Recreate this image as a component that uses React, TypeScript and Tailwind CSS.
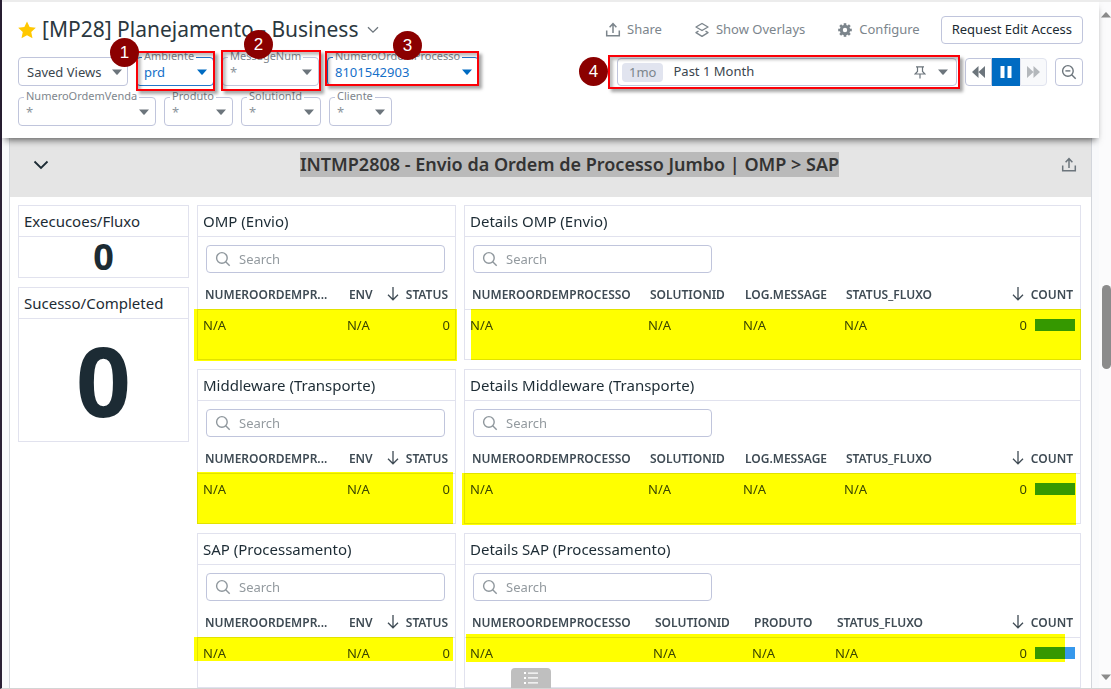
import React, { useId } from "react";

function Caret({ className = "" }: { className?: string }) {
  return (
    <svg viewBox="0 0 10 6" className={"pointer-events-none h-[6px] w-[10px] " + className} aria-hidden="true">
      <path d="M0 0.5h10L5.6 5.4a.8.8 0 0 1-1.2 0z" fill="currentColor" />
    </svg>
  );
}

function ExportIcon() {
  return (
    <svg viewBox="0 0 16 16" className="size-4" fill="none" stroke="currentColor" strokeWidth="1.5" aria-hidden="true">
      <path d="M1.7 8.5v5.3h12.6V8.5" />
      <path d="M8 11V2M4.6 5.2 8 1.7l3.4 3.5" />
    </svg>
  );
}

function LayersIcon() {
  return (
    <svg viewBox="0 0 16 16" className="size-4" fill="none" stroke="currentColor" strokeWidth="1.4" strokeLinejoin="round" aria-hidden="true">
      <path d="M8 1.5 14 5 8 8.500 2 5z" />
      <path d="M4.500 9 2 10.600l6 3.700 6-3.700L11.500 9" />
    </svg>
  );
}

const gearTeeth = [0, 45, 90, 135, 180, 225, 270, 315];

function GearIcon() {
  return (
    <svg viewBox="0 0 16 16" className="size-4" fill="none" stroke="currentColor" aria-hidden="true">
      <circle cx="8" cy="8" r="3.700" strokeWidth="3" />
      {gearTeeth.map((angle) => (
        <path key={angle} d="M8 3.500V1.200" strokeWidth="2.600" transform={`rotate(${angle} 8 8)`} />
      ))}
    </svg>
  );
}

function SearchIcon({ minus = false }: { minus?: boolean }) {
  return (
    <svg viewBox="0 0 16 16" className="size-4" fill="none" stroke="currentColor" strokeWidth="1.4" aria-hidden="true">
      <circle cx="6.900" cy="6.900" r="5.300" />
      <path d="m10.700 10.700 4 4" />
      {minus && <path d="M4.400 6.900h5" />}
    </svg>
  );
}

function Callout({ n, className }: { n: number; className: string }) {
  return (
    <span
      className={
        "absolute z-20 flex size-[29px] items-center justify-center rounded-full bg-[#8b0000] font-['Liberation_Sans',sans-serif] text-[17px] leading-none text-white " +
        className
      }
    >
      {n}
    </span>
  );
}

function Frame({ className }: { className: string }) {
  return (
    <span
      className={
        "pointer-events-none absolute z-10 border-2 border-[#fb0007] shadow-[3px_3px_3px_rgba(0,0,0,0.35),inset_3px_3px_3px_rgba(0,0,0,0.25)] " +
        className
      }
    />
  );
}

type FilterProps = {
  label: string;
  value: string;
  width: string;
  active?: boolean;
  children?: React.ReactNode;
};

function Filter({ label, value, width, active = false, children }: FilterProps) {
  const id = useId();
  return (
    <div className={"relative " + width}>
      <select
        id={id}
        defaultValue={value}
        className={
          "h-[29px] w-full appearance-none rounded border bg-white pl-[7px] pr-5 pt-[2px] text-[13px] outline-none " +
          (active ? "border-[#2377cb] text-[#1570c9]" : "border-[#c0c5dc] text-[#8b949b]")
        }
      >
        <option>{value}</option>
      </select>
      <label
        htmlFor={id}
        className="absolute -top-[9px] left-[6px] bg-white px-[2px] text-[11px] leading-4 text-[#7e868d]"
      >
        {label}
      </label>
      <Caret className={"absolute right-[7px] top-3 " + (active ? "text-[#006bc2]" : "text-[#6c757c]")} />
      {children}
    </div>
  );
}

function Search({ label }: { label: string }) {
  return (
    <label className="flex h-7 w-[239px] items-center gap-2 rounded border border-[#c0c5dc] bg-white px-2 text-[#8f979d]">
      <SearchIcon />
      <input
        type="text"
        aria-label={"Search " + label}
        placeholder="Search"
        className="min-w-0 flex-1 bg-transparent pt-[2px] text-[13px] outline-none placeholder:text-[#939a9f]"
      />
    </label>
  );
}

function SortArrow() {
  return (
    <svg viewBox="0 0 12 14" className="inline-block h-[14px] w-3 align-[-2px]" fill="none" stroke="currentColor" strokeWidth="1.3" aria-hidden="true">
      <path d="M6 0v12.500M1 7.800l5 5 5-5" />
    </svg>
  );
}

function StatCard({ title, children, className }: { title: string; children: React.ReactNode; className: string }) {
  return (
    <section className={"flex flex-col border border-[#e1e2ee] bg-white " + className}>
      <h3 className="h-[31px] border-b border-[#e1e2ee] px-[5px] text-[15px] leading-[31px] text-[#1c2b34]">{title}</h3>
      <div className="flex flex-1 items-center justify-center font-bold leading-none text-[#1c2b34]">{children}</div>
    </section>
  );
}

type Column = { name: string; width: string };

type TableCardProps = {
  title: string;
  columns: Column[];
  total: string;
  bar?: boolean;
  marker: string;
};

function TableCard({ title, columns, total, bar = false, marker }: TableCardProps) {
  return (
    <section className="relative isolate h-[155px] min-w-0 border border-[#e1e2ee] bg-white">
      <h3 className="h-[31px] border-b border-[#e1e2ee] px-[5px] text-[15px] leading-[31px] text-[#1c2b34]">{title}</h3>
      <div className="px-2 pt-2">
        <Search label={title} />
      </div>
      <table className="mt-2 w-full table-fixed border-collapse text-left text-[13px] text-[#3b464e]">
        <colgroup>
          {columns.map((c) => (
            <col key={c.name} className={c.width} />
          ))}
          <col />
        </colgroup>
        <thead>
          <tr className="h-7 border-b border-[#e1e2ee] text-[12px] text-[#3f4b54]">
            {columns.map((c) => (
              <th key={c.name} scope="col" className="whitespace-nowrap p-0 pl-[7px] font-semibold">
                {c.name}
              </th>
            ))}
            <th scope="col" className="whitespace-nowrap p-0 pr-[7px] text-right font-semibold">
              <SortArrow /> <span className="pl-1">{total}</span>
            </th>
          </tr>
        </thead>
        <tbody>
          <tr className="h-8">
            {columns.map((c) => (
              <td key={c.name} className="p-0 pl-[5px]">
                N/A
              </td>
            ))}
            <td className="p-0 pr-[5px]">
              <div className="flex items-center justify-end gap-2">
                0{bar && <span className="h-3 w-10 bg-[#3598ec]" />}
              </div>
            </td>
          </tr>
        </tbody>
      </table>
      <span className={"pointer-events-none absolute bg-[#ffff00] mix-blend-multiply " + marker} />
    </section>
  );
}

const summary: Column[] = [
  { name: "NUMEROORDEMPR...", width: "w-[56%]" },
  { name: "ENV", width: "w-[14%]" },
];
const details: Column[] = [
  { name: "NUMEROORDEMPROCESSO", width: "w-[178px]" },
  { name: "SOLUTIONID", width: "w-[95px]" },
  { name: "LOG.MESSAGE", width: "w-[101px]" },
  { name: "STATUS_FLUXO", width: "w-[110px]" },
];
const detailsSap: Column[] = [
  { name: "NUMEROORDEMPROCESSO", width: "w-[183px]" },
  { name: "SOLUTIONID", width: "w-[99px]" },
  { name: "PRODUTO", width: "w-[83px]" },
  { name: "STATUS_FLUXO", width: "w-[110px]" },
];

const toolLink = "flex items-center gap-[6px] text-[13px] text-[#7c858c]";

export default function App() {
  return (
    <div className="relative flex min-h-screen border-b border-l-2 border-b-[#d4d4d4] border-l-[#2a2035] bg-white font-['Noto_Sans',sans-serif]">
      <div className="flex min-w-0 flex-1 flex-col bg-[#f8f9fb]">
        <header className="relative z-10 flex h-[138px] flex-col border-t-2 border-[#ececec] bg-white pl-4 pr-4 shadow-[0_5px_7px_-3px_rgba(0,0,0,0.6)]">
          <div className="mt-[14px] flex h-7 items-center">
            <svg viewBox="0 0 20 20" className="size-[18px]" aria-hidden="true">
              <path d="m10 .5 2.900 6.300 6.900.8-5.100 4.700 1.400 6.800L10 15.700l-6.100 3.400 1.400-6.800L.2 7.600l6.900-.8z" fill="#ffc800" />
            </svg>
            <h1 className="ml-[6px] whitespace-nowrap text-[21px] text-[#2b3840]">[MP28] Planejamento - Business</h1>
            <button type="button" aria-label="Dashboard menu" className="ml-[9px] text-[#6c757c]">
              <svg viewBox="0 0 12 8" className="h-2 w-3" fill="none" stroke="currentColor" strokeWidth="1.300">
                <path d="m1 1.200 5 5 5-5" />
              </svg>
            </button>
            <div className="ml-auto flex items-center">
              <a href="#share" className={toolLink}>
                <ExportIcon /> Share
              </a>
              <a href="#overlays" className={toolLink + " ml-8"}>
                <LayersIcon /> Show Overlays
              </a>
              <a href="#configure" className={toolLink + " ml-8"}>
                <GearIcon /> Configure
              </a>
              <button type="button" className="ml-[21px] h-7 whitespace-nowrap rounded border border-[#c0c5dc] px-[10px] text-[13px] text-[#1c2b34]">
                Request Edit Access
              </button>
            </div>
          </div>
          <div className="mt-[13px] flex items-start">
            <div className="flex gap-2">
              <div className="relative w-[110px]">
                <select aria-label="Saved Views" className="h-[29px] w-full appearance-none rounded border border-[#c0c5dc] bg-white pl-2 pt-[2px] text-[13px] text-[#3b464e]">
                  <option>Saved Views</option>
                </select>
                <Caret className="absolute right-[6px] top-3 text-[#6c757c]" />
              </div>
              <Filter label="Ambiente" value="prd" width="w-[78px]" active>
                <Frame className="left-0 -top-[6px] h-[40px] w-[79px]" />
                <Callout n={1} className="-left-[26px] -top-[19px]" />
              </Filter>
              <Filter label="MessageNum" value="*" width="w-[97px]">
                <Frame className="-left-px -top-[7px] h-[41px] w-[100px]" />
                <Callout n={2} className="left-[22px] -top-[27px]" />
              </Filter>
              <Filter label="NumeroOrdemProcesso" value="8101542903" width="w-[152px]" active>
                <Frame className="-left-[2px] -top-[6px] h-[35px] w-[154px]" />
                <Callout n={3} className="left-[66px] -top-[26px]" />
              </Filter>
            </div>
            <div className="ml-auto flex items-center pt-px">
              <button type="button" className="relative flex h-7 w-[340px] items-center rounded border border-[#c0c5dc] pl-1 pr-2 text-[13px] text-[#3b464e]">
                <span className="rounded bg-[#e1e4ef] px-[7px] leading-[19px] text-[#7c858c]">1mo</span>
                <span className="ml-[10px]">Past 1 Month</span>
                <svg viewBox="0 0 12 13" className="ml-auto h-[13px] w-3 text-[#6c757c]" fill="none" stroke="currentColor" strokeWidth="1.200" aria-hidden="true">
                  <path d="M2 .8h8M3.500 1v4.500L1 8h10L8.500 5.500V1M6 8v4.600" />
                </svg>
                <Caret className="ml-[12px] text-[#6c757c]" />
                <Frame className="-left-[10px] -top-[4px] h-[34px] w-[352px]" />
                <Callout n={4} className="-left-[39px] -top-[2px]" />
              </button>
              <div className="ml-2 flex h-7 w-[82px]">
                <button type="button" aria-label="Back" className="flex flex-1 items-center justify-center rounded-l border border-[#c0c5dc] text-[#6c757c]">
                  <svg viewBox="0 0 13 12" className="h-3 w-[13px]" fill="currentColor">
                    <path d="M6.500 0v12L0 6zM13 0v12L6.500 6z" />
                  </svg>
                </button>
                <button type="button" aria-label="Pause" className="flex w-7 items-center justify-center bg-[#006bc2] text-white">
                  <svg viewBox="0 0 12 12" className="size-3" fill="currentColor">
                    <path d="M.5 0h4v12h-4zM7.500 0h4v12h-4z" />
                  </svg>
                </button>
                <button type="button" aria-label="Forward" disabled className="flex flex-1 items-center justify-center rounded-r border border-[#e1e4ef] bg-[#f8f9fb] text-[#b4b8bc]">
                  <svg viewBox="0 0 13 12" className="h-3 w-[13px]" fill="currentColor">
                    <path d="M0 0v12l6.500-6zM6.500 0v12L13 6z" />
                  </svg>
                </button>
              </div>
              <button type="button" aria-label="Zoom out" className="ml-2 flex size-7 items-center justify-center rounded border border-[#c0c5dc] text-[#6c757c]">
                <SearchIcon minus />
              </button>
            </div>
          </div>
          <div className="mt-[11px] flex gap-2">
            <Filter label="NumeroOrdemVenda" value="*" width="w-[138px]" />
            <Filter label="Produto" value="*" width="w-[69px]" />
            <Filter label="SolutionId" value="*" width="w-[80px]" />
            <Filter label="Cliente" value="*" width="w-[63px]" />
          </div>
        </header>

        <main className="ml-[7px] mr-[7px] flex-1 border-x border-[#d3d6dc] bg-white">
          <div className="flex h-[59px] items-center bg-[#e5e5e5] pb-[6px] pl-[23px] pr-[14px]">
            <button type="button" aria-label="Collapse group" className="w-[45px] text-[#1c2b34]">
              <svg viewBox="0 0 16 10" className="h-[10px] w-4" fill="none" stroke="currentColor" strokeWidth="1.800">
                <path d="m1.500 1.500 6.500 6.500 6.500-6.500" />
              </svg>
            </button>
            <h2 className="flex-1 text-center text-[18px] font-semibold leading-[25px] text-[#333333]">
              <span className="inline-block bg-[#bababa]">INTMP2808 - Envio da Ordem de Processo Jumbo | OMP &gt; SAP</span>
            </h2>
            <button type="button" aria-label="Share group" className="text-[#6c757c]">
              <ExportIcon />
            </button>
          </div>

          <div className="grid grid-cols-[171fr_259fr_617fr] gap-x-2 pl-2 pr-[10px] pt-2">
            <div className="flex flex-col gap-[9px]">
              <StatCard title="Execucoes/Fluxo" className="h-[73px]">
                <span className="text-[36px]">0</span>
              </StatCard>
              <StatCard title="Sucesso/Completed" className="h-[155px]">
                <span className="text-[96px]">0</span>
              </StatCard>
            </div>
            <div className="flex min-w-0 flex-col gap-[9px]">
              <TableCard title="OMP (Envio)" columns={summary} total="STATUS" marker="-left-1 -right-[2px] top-[103px] -bottom-[2px]" />
              <TableCard title="Middleware (Transporte)" columns={summary} total="STATUS" marker="-left-px right-[2px] top-[102px] -bottom-px" />
              <TableCard title="SAP (Processamento)" columns={summary} total="STATUS" marker="-left-1 right-[2px] top-[103px] h-6" />
            </div>
            <div className="flex min-w-0 flex-col gap-[9px]">
              <TableCard title="Details OMP (Envio)" columns={details} total="COUNT" bar marker="left-[6px] -right-px top-[103px] -bottom-px" />
              <TableCard title="Details Middleware (Transporte)" columns={details} total="COUNT" bar marker="-left-[3px] right-1 top-[103px] -bottom-[2px]" />
              <TableCard title="Details SAP (Processamento)" columns={detailsSap} total="COUNT" bar marker="left-px right-[15px] top-[100px] h-7" />
            </div>
          </div>
        </main>
      </div>

      <aside aria-hidden="true" className="flex w-3 flex-col items-end border-t-2 border-[#ececec] bg-[#fbfbfc] pb-2 pt-[10px] text-[#8b8b8b]">
        <Caret className="rotate-180" />
        <span className="mt-[267px] h-[84px] w-[9px] rounded-full bg-[#8b8b8b]" />
        <Caret className="mt-auto" />
      </aside>

      <button type="button" aria-label="Table of contents" className="absolute bottom-0 left-[509px] flex h-5 w-10 items-center justify-center rounded-t bg-[#bfbfbf] text-white">
        <svg viewBox="0 0 14 12" className="h-3 w-[14px]" fill="currentColor">
          <path d="M0 0h2v2H0zM4 .5h10v1.300H4zM0 5h2v2H0zM4 5.300h10v1.300H4zM0 10h2v2H0zM4 10.300h10v1.300H4z" />
        </svg>
      </button>
    </div>
  );
}
